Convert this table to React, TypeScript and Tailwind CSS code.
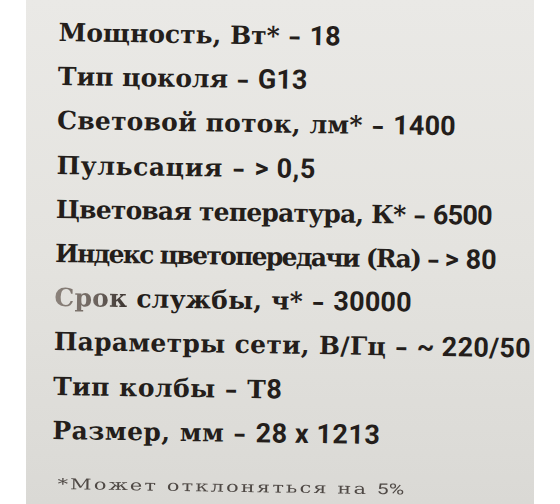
const SERIF = "font-['DejaVu_Serif','Liberation_Serif',serif]";
const SANS = "font-['Roboto','Liberation_Sans',sans-serif] text-[27px]";

type Seg = [string, "s" | "n"];

// each row: segments + letter spacing to hit the label's line lengths
const LINES: { segs: Seg[]; track: string }[] = [
  { track: "tracking-normal", segs: [["Мощность, Вт* – ", "s"], ["18", "n"]] },
  { track: "tracking-normal", segs: [["Тип цоколя – ", "s"], ["G13", "n"]] },
  { track: "tracking-[0.2px]", segs: [["Световой поток, лм* – ", "s"], ["1400", "n"]] },
  { track: "tracking-[0.6px]", segs: [["Пульсация – ", "s"], ["> 0,5", "n"]] },
  { track: "tracking-[-0.8px]", segs: [["Цветовая тепература, К* – ", "s"], ["6500", "n"]] },
  { track: "tracking-[-1.7px]", segs: [["Индекс цветопередачи (Ra) – ", "s"], ["> 80", "n"]] },
  { track: "tracking-[0.2px]", segs: [["службы, ч* – ", "s"], ["30000", "n"]] },
  { track: "tracking-[0.3px]", segs: [["Параметры сети, В/Гц – ", "s"], ["~ 220/50", "n"]] },
  { track: "tracking-[0.5px]", segs: [["Тип колбы – Т", "s"], ["8", "n"]] },
  { track: "tracking-[0.5px]", segs: [["Размер, мм – ", "s"], ["28 x 1213", "n"]] },
];

export default function App() {
  return (
    <div className="w-[560px] h-[504px] bg-white overflow-hidden">
      <div className="ml-[26px] w-[508px] h-full bg-gradient-to-b from-[#eae9e6] via-[#e4e3df] to-[#dad9d5] pt-[9px] text-[#241e1b]">
        {/* the photo is a little tilted, so the text block is too */}
        <div className="ml-[33px] origin-top-left rotate-[0.9deg]">
          {LINES.map(({ segs, track }, i) => (
            <div
              key={i}
              className={`h-[44.2px] leading-[44px] text-[25px] font-bold whitespace-nowrap ${track}`}
            >
              {i === 6 && (
                <span
                  className={`${SERIF} bg-gradient-to-r from-[#8c837c] via-[#6e655f] to-[#2e2724] bg-clip-text text-transparent`}
                >
                  Срок{" "}
                </span>
              )}
              {segs.map(([text, kind], j) => (
                <span
                  key={j}
                  className={kind === "s" ? SERIF : `${SANS} ${i === 5 ? "tracking-normal" : ""}`}
                >
                  {text}
                </span>
              ))}
            </div>
          ))}
          <div className="mt-[22px] ml-[6px] h-[20px] leading-[20px] whitespace-nowrap">
            <span
              className={`${SERIF} inline-block origin-left scale-x-[1.4] text-[15px] tracking-[1.5px] text-[#4f4945]`}
            >
              *Может отклоняться на <span className="font-['Roboto',sans-serif] tracking-normal">5%</span>
            </span>
          </div>
        </div>
      </div>
    </div>
  );
}
